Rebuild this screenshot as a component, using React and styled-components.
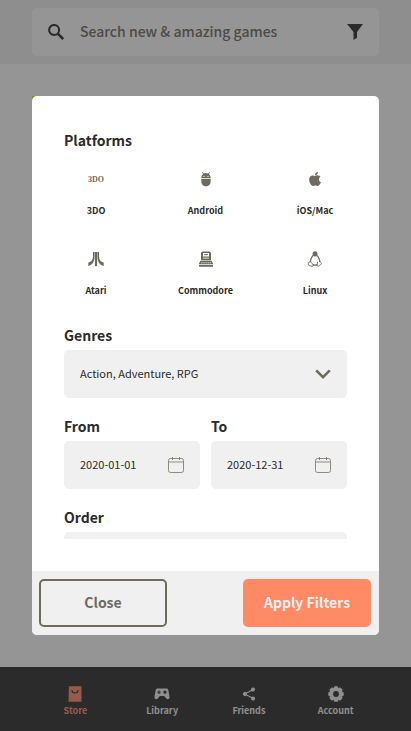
import React from "react";
import styled, { createGlobalStyle } from "styled-components";
import { FaApple } from "react-icons/fa";
import { MdAdb } from "react-icons/md";
import { IoShareSocial } from "react-icons/io5";

const dark = "#2b2b2b";
const stone = "#6e6a5e";
const mist = "#f0f0f0";
const coral = "#ff8a65";

const GlobalStyle = createGlobalStyle`
  *, *::before, *::after { box-sizing: border-box; }
  body {
    margin: 0;
    background: #fff;
    color: ${dark};
    font-family: "Noto Sans CJK SC", "Noto Sans", sans-serif;
  }
  button, input, select { font: inherit; color: inherit; }
`;

const Page = styled.div`
  display: flex;
  flex-direction: column;
  height: 100vh;
`;

const Header = styled.header`
  padding: 8px 32px;
  background: ${mist};
`;

const SearchBar = styled.div`
  display: flex;
  align-items: center;
  gap: 16px;
  height: 48px;
  padding: 0 16px;
  border-radius: 5px;
  background: #fff;
`;

const SearchInput = styled.input`
  flex: 1;
  min-width: 0;
  height: 48px;
  padding: 0 0 2px;
  border: 0;
  outline: 0;
  background: none;
  font-size: 14px;
  font-weight: 500;
  &::placeholder { color: ${stone}; opacity: 1; }
`;

const IconButton = styled.button`
  display: flex;
  padding: 0;
  border: 0;
  background: none;
`;

const Feed = styled.main`
  flex: 1;
  padding: 32px;
`;

const Ribbon = styled.div`
  width: 64px;
  height: 16px;
  background: #ffee00;
`;

const NavBar = styled.nav`
  display: flex;
  height: 64px;
  padding: 0 32px;
  background: ${dark};
`;

const NavLink = styled.a`
  flex: 1;
  display: flex;
  flex-direction: column;
  align-items: center;
  justify-content: center;
  gap: 1px;
  padding-top: 7px;
  color: ${(p) => (p.$active ? coral : mist)};
  font-size: 9px;
  font-weight: 700;
  line-height: 16px;
  text-decoration: none;
  svg { width: 16px; height: 16px; }
`;

const Backdrop = styled.div`
  position: fixed;
  inset: 0;
  display: flex;
  padding: 96px 32px;
  background: rgba(43, 43, 43, 0.5);
`;

const Dialog = styled.form`
  flex: 1;
  display: flex;
  flex-direction: column;
  min-width: 0;
  border-radius: 5px;
  overflow: hidden;
  background: #fff;
`;

const DialogBody = styled.div`
  flex: 1;
  display: flex;
  min-height: 0;
  padding: 32px;
`;

const ScrollArea = styled.div`
  flex: 1;
  display: flex;
  flex-direction: column;
  gap: 16px;
  min-width: 0;
  overflow-y: auto;
  scrollbar-width: none;
`;

const Group = styled.fieldset`
  flex: none;
  min-width: 0;
  margin: 0;
  padding: 0;
  border: 0;
`;

const Heading = styled.legend`
  padding: 0 0 2px;
  font-size: 14px;
  font-weight: 700;
  line-height: 25px;
`;

const Field = styled.div`
  min-width: 0;
`;

const FieldLabel = styled.label`
  display: block;
  padding-bottom: 2px;
  font-size: 14px;
  font-weight: 700;
  line-height: 25px;
`;

const PlatformGrid = styled.div`
  display: grid;
  grid-template-columns: repeat(3, 64px);
  justify-content: space-between;
  gap: 8px;
`;

const PlatformOption = styled.label`
  display: flex;
  flex-direction: column;
  align-items: center;
  gap: 16px;
  padding: 16px 0 8px;
  font-size: 9px;
  font-weight: 700;
  line-height: 16px;
  svg { display: block; width: 16px; height: 16px; color: ${stone}; }
`;

const HiddenCheck = styled.input`
  position: absolute;
  width: 1px;
  height: 1px;
  margin: 0;
  opacity: 0;
`;

const ControlBox = styled.div`
  display: flex;
  align-items: center;
  height: 48px;
  padding-right: 16px;
  border-radius: 5px;
  background: ${mist};
  color: ${stone};
  svg { flex: none; display: block; }
`;

const SelectInput = styled.select`
  flex: 1;
  min-width: 0;
  height: 100%;
  padding: 0 16px 2px;
  border: 0;
  outline: 0;
  appearance: none;
  background: none;
  color: ${dark};
  font-size: 11px;
`;

const DateInput = styled.input`
  flex: 1;
  width: 0;
  min-width: 0;
  height: 100%;
  padding: 0 0 2px 16px;
  border: 0;
  outline: 0;
  background: none;
  color: ${dark};
  font-size: 11px;
`;

const DateRow = styled.div`
  flex: none;
  display: grid;
  grid-template-columns: 1fr 1fr;
  gap: 11px;
`;

const DialogFooter = styled.footer`
  display: flex;
  align-items: center;
  justify-content: space-between;
  height: 64px;
  padding: 0 8px 0 7px;
  background: ${mist};
`;

const Action = styled.button`
  width: 128px;
  height: 48px;
  padding: 0 0 2px;
  border: 2px solid ${(p) => (p.$primary ? coral : stone)};
  border-radius: 5px;
  background: ${(p) => (p.$primary ? coral : "transparent")};
  color: ${(p) => (p.$primary ? mist : stone)};
  font-size: 14px;
  font-weight: 700;
`;

const LogoText = styled.text`
  font-family: "Liberation Serif", serif;
  font-size: 8px;
  font-weight: 700;
  text-anchor: middle;
`;

const SearchIcon = () => (
  <svg width="16" height="16" viewBox="0 0 16 16" fill="none" stroke="currentColor" aria-hidden="true">
    <circle cx="6.100" cy="6" r="5" strokeWidth="2.100" />
    <path d="M9.800 9.600l5.400 5.400" strokeWidth="2.700" />
  </svg>
);

const FunnelIcon = () => (
  <svg width="16" height="16" viewBox="0 0 16 16" fill="currentColor" aria-hidden="true">
    <path d="M0 .1h16L10 7.900v5.800L6.500 16V7.900z" />
  </svg>
);

const ThreeDoIcon = () => (
  <svg viewBox="0 0 16 16" fill="currentColor" aria-hidden="true">
    <LogoText x="8" y="10.500">3DO</LogoText>
  </svg>
);

const AtariIcon = () => (
  <svg viewBox="0 0 16 16" fill="currentColor" aria-hidden="true">
    <path d="M6.900 1h2.200v14H6.900zM5 1h1.500v5C6.500 10.500 4.500 14 .3 15v-3.400C3.800 10.500 5 8.500 5 5zM11 1H9.500v5c0 4.500 2 8 6.200 9v-3.400C12.200 10.500 11 8.500 11 5z" />
  </svg>
);

const CommodoreIcon = () => (
  <svg viewBox="0 0 16 16" fill="currentColor" aria-hidden="true">
    <path fillRule="evenodd" d="M4.200.5h7.600l1.200 1.200V9.300H3V1.700zM5 2v3.400h6V2zM5 6.700v.8h6v-.8z" />
    <path d="M6 3.200h4v1H6z" />
    <path fillRule="evenodd" d="M2.400 9.800h11.200l1.800 3.500H.600zM3.400 11.200v1h1v-1zm2.100 0v1h1v-1zm2.100 0v1h1v-1zm2.100 0v1h1v-1zm2.100 0v1h1v-1zM1 14h14v1.700H1z" />
  </svg>
);

const PenguinIcon = () => (
  <svg viewBox="0 0 16 16" fill="none" stroke="currentColor" aria-hidden="true">
    <path fill="currentColor" stroke="none" d="M8 .300c1.700 0 2.500 1.200 2.500 2.800 0 1 .1 1.800.7 2.700L8.600 5 8 5.800 6.900 5 4.800 5.900c.6-1 .8-1.800.8-2.800C5.600 1.500 6.300.3 8 .3z" />
    <path strokeWidth="1.300" d="M5.600 4.800C4.400 6.800 3.300 8.400 3.300 11M10.500 4.800c1.300 2 2.400 3.600 2.400 6.200M5.800 13.700c1.500.6 3 .6 4.500 0" />
    <path strokeWidth=".9" d="M3.300 10.500c-.8 1-1.700.8-1.900 1.300-.2.600.2 1.400 0 2.100.3.900 2.300.8 3.600 1.500 1 .2 1.700-.9.800-2.100zM12.800 10.500c.7.9 1.200 1.100 1.700 2.100-.1.900-1.900 1.500-2.800 2.600-1 .4-1.700-.4-1.500-1.500l.3-2.900" />
  </svg>
);

const ChevronIcon = () => (
  <svg width="16" height="16" viewBox="0 0 16 16" fill="none" stroke="currentColor" strokeWidth="2.600" aria-hidden="true">
    <path d="M1.200 4.400 8 11.200l6.800-6.800" />
  </svg>
);

const CalendarIcon = () => (
  <svg width="16" height="16" viewBox="0 0 16 16" fill="none" stroke="currentColor" strokeOpacity=".75" aria-hidden="true">
    <rect x=".5" y="1.500" width="15" height="14" rx="2" />
    <path d="M1 5h14M4.500 0v3M11.500 0v3" />
  </svg>
);

const StoreIcon = () => (
  <svg viewBox="0 0 16 16" aria-hidden="true">
    <path fill="currentColor" d="M1.900.3h12.600v15.500H1.500z" />
    <path fill="none" stroke={dark} strokeWidth="1.100" d="M5 4v.4a3 2.400 0 0 0 6 0V4" />
  </svg>
);

const GamepadIcon = () => (
  <svg viewBox="0 0 16 16" fill="currentColor" aria-hidden="true">
    <path
      fillRule="evenodd"
      d="M3.500 2.500h9c1 0 1.500.6 1.800 1.600l1.200 6.400c.3 1.600-.5 2.700-1.700 2.700-.7 0-1.200-.3-1.600-.8L10.200 10H5.800l-2 2.400c-.4.500-.9.800-1.600.8C1 13.200.2 12.100.5 10.500l1.200-6.400c.3-1 .8-1.600 1.800-1.600zM4.500 4.500v1.200H3.300v1.100h1.200V8h1.100V6.800h1.200V5.700H5.600V4.500zM11 4.600a1.600 1.600 0 1 0 0 3.200 1.600 1.600 0 0 0 0-3.200z"
    />
  </svg>
);

const petals = [0, 45, 90, 135, 180, 225, 270, 315];

const GearIcon = () => (
  <svg viewBox="0 0 16 16" fill="currentColor" aria-hidden="true">
    <circle cx="8" cy="8" r="4.700" fill="none" stroke="currentColor" strokeWidth="3.600" />
    {petals.map((angle) => (
      <rect key={angle} x="5.800" y=".3" width="4.400" height="3" rx="1.200" transform={`rotate(${angle} 8 8)`} />
    ))}
  </svg>
);

const platforms = [
  ["3DO", ThreeDoIcon],
  ["Android", MdAdb],
  ["iOS/Mac", FaApple],
  ["Atari", AtariIcon],
  ["Commodore", CommodoreIcon],
  ["Linux", PenguinIcon],
];

const tabs = [
  ["Store", StoreIcon],
  ["Library", GamepadIcon],
  ["Friends", IoShareSocial],
  ["Account", GearIcon],
];

const SelectField = ({ id, label, value }) => (
  <Group as="div">
    <FieldLabel htmlFor={id}>{label}</FieldLabel>
    <ControlBox>
      <SelectInput id={id} defaultValue={value}>
        <option value={value}>{value}</option>
      </SelectInput>
      <ChevronIcon />
    </ControlBox>
  </Group>
);

const DateField = ({ id, label, value }) => (
  <Field>
    <FieldLabel htmlFor={id}>{label}</FieldLabel>
    <ControlBox>
      <DateInput id={id} type="text" defaultValue={value} />
      <CalendarIcon />
    </ControlBox>
  </Field>
);

export default function App() {
  return (
    <>
      <GlobalStyle />
      <Page>
        <Header>
          <SearchBar>
            <SearchIcon />
            <SearchInput type="search" aria-label="Search games" placeholder="Search new & amazing games" />
            <IconButton type="button" aria-label="Filter">
              <FunnelIcon />
            </IconButton>
          </SearchBar>
        </Header>
        <Feed>
          <Ribbon />
        </Feed>
        <NavBar>
          {tabs.map(([name, Icon], index) => (
            <NavLink key={name} href={`#${name.toLowerCase()}`} $active={index === 0}>
              <Icon />
              {name}
            </NavLink>
          ))}
        </NavBar>
      </Page>
      <Backdrop>
        <Dialog role="dialog" aria-label="Filters">
          <DialogBody>
            <ScrollArea>
              <Group>
                <Heading>Platforms</Heading>
                <PlatformGrid>
                  {platforms.map(([name, Icon]) => (
                    <PlatformOption key={name}>
                      <HiddenCheck type="checkbox" name="platform" value={name} />
                      <Icon />
                      {name}
                    </PlatformOption>
                  ))}
                </PlatformGrid>
              </Group>
              <SelectField id="genres" label="Genres" value="Action, Adventure, RPG" />
              <DateRow>
                <DateField id="from" label="From" value="2020-01-01" />
                <DateField id="to" label="To" value="2020-12-31" />
              </DateRow>
              <SelectField id="order" label="Order" value="" />
            </ScrollArea>
          </DialogBody>
          <DialogFooter>
            <Action type="button">Close</Action>
            <Action type="button" $primary>Apply Filters</Action>
          </DialogFooter>
        </Dialog>
      </Backdrop>
    </>
  );
}
